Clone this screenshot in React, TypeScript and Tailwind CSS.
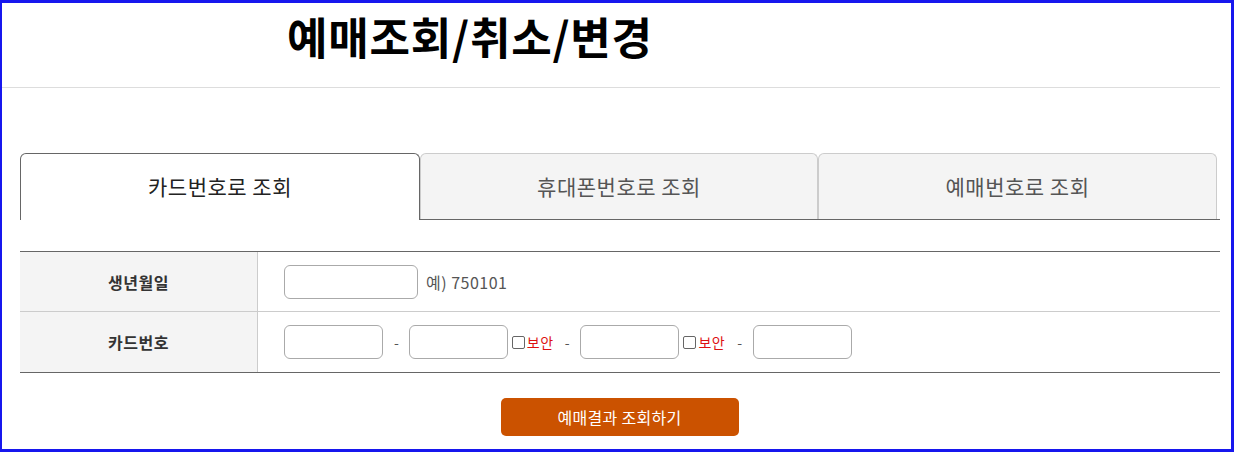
const font = "font-['Malgun_Gothic','Noto_Sans_CJK_KR',sans-serif]";

function TextBox(props: { w: string }) {
  return (
    <input
      type="text"
      className={`${props.w} h-[34px] rounded-[6px] border border-[#aaa] bg-white outline-none`}
    />
  );
}

function Secure() {
  return (
    <label className="flex items-center ml-[4px]">
      <span className="w-[13px] h-[13px] border border-[#666] rounded-[2px] bg-white mr-[2px]" />
      <span className="text-[14px] text-[#d11] tracking-[0.5px]">보안</span>
    </label>
  );
}

function Dash(props: { cls: string }) {
  return <span className={`text-[14px] text-[#555] ${props.cls}`}>-</span>;
}

export default function App() {
  const tabs = [
    { label: "카드번호로 조회", w: "w-[400px]", active: true },
    { label: "휴대폰번호로 조회", w: "w-[398px]", active: false },
    { label: "예매번호로 조회", w: "w-[399px]", active: false },
  ];

  return (
    <div
      className={`w-[1234px] h-[452px] bg-white border-[#1717ee] border-t-[3px] border-l-2 border-r-[3px] border-b-[3px] ${font}`}
    >
      {/* title */}
      <div className="h-[85px] mr-[11px] border-b border-[#ddd] pl-[285px] pt-[5px]">
        <h1 className="text-[44px] font-bold text-black tracking-[0.8px] leading-[56px]">
          예매조회/취소/변경
        </h1>
      </div>

      {/* tabs */}
      <div className="mt-[65px] ml-[18px] mr-[11px] flex border-b border-[#666]">
        {tabs.map((t) =>
          t.active ? (
            <div
              key={t.label}
              className={`${t.w} h-[67px] -mb-px bg-white border border-b-0 border-[#666] rounded-t-[6px] flex items-center justify-center text-[21px] tracking-[0.5px] text-[#222]`}
            >
              {t.label}
            </div>
          ) : (
            <div
              key={t.label}
              className={`${t.w} h-[66px] bg-[#f4f4f4] border border-b-0 border-[#ccc] rounded-t-[6px] flex items-center justify-center text-[21px] tracking-[0.5px] text-[#555]`}
            >
              {t.label}
            </div>
          )
        )}
      </div>

      {/* form */}
      <div className="mt-[31px] ml-[18px] mr-[11px] border-t border-b border-[#666]">
        <div className="flex h-[60px] border-b border-[#ccc]">
          <div className="w-[238px] bg-[#f4f4f4] border-r border-[#ccc] flex items-center justify-center text-[16px] font-bold text-[#333] tracking-[0.5px]">
            생년월일
          </div>
          <div className="flex items-center pl-[26px]">
            <TextBox w="w-[134px]" />
            <span className="ml-[8px] text-[16px] text-[#555] tracking-[0.5px]">예) 750101</span>
          </div>
        </div>
        <div className="flex h-[60px]">
          <div className="w-[238px] bg-[#f4f4f4] border-r border-[#ccc] flex items-center justify-center text-[16px] font-bold text-[#333] tracking-[0.5px]">
            카드번호
          </div>
          <div className="flex items-center pl-[26px]">
            <TextBox w="w-[99px]" />
            <Dash cls="ml-[11px] mr-[10px]" />
            <TextBox w="w-[99px]" />
            <Secure />
            <Dash cls="ml-[11px] mr-[11px]" />
            <TextBox w="w-[99px]" />
            <Secure />
            <Dash cls="ml-[12px] mr-[11px]" />
            <TextBox w="w-[99px]" />
          </div>
        </div>
      </div>

      {/* submit */}
      <div className="flex justify-center mt-[25px] pl-[6px]">
        <button className="w-[238px] h-[38px] rounded-[5px] bg-[#cb5200] text-white text-[16px] tracking-[0.3px]">
          예매결과 조회하기
        </button>
      </div>
    </div>
  );
}
